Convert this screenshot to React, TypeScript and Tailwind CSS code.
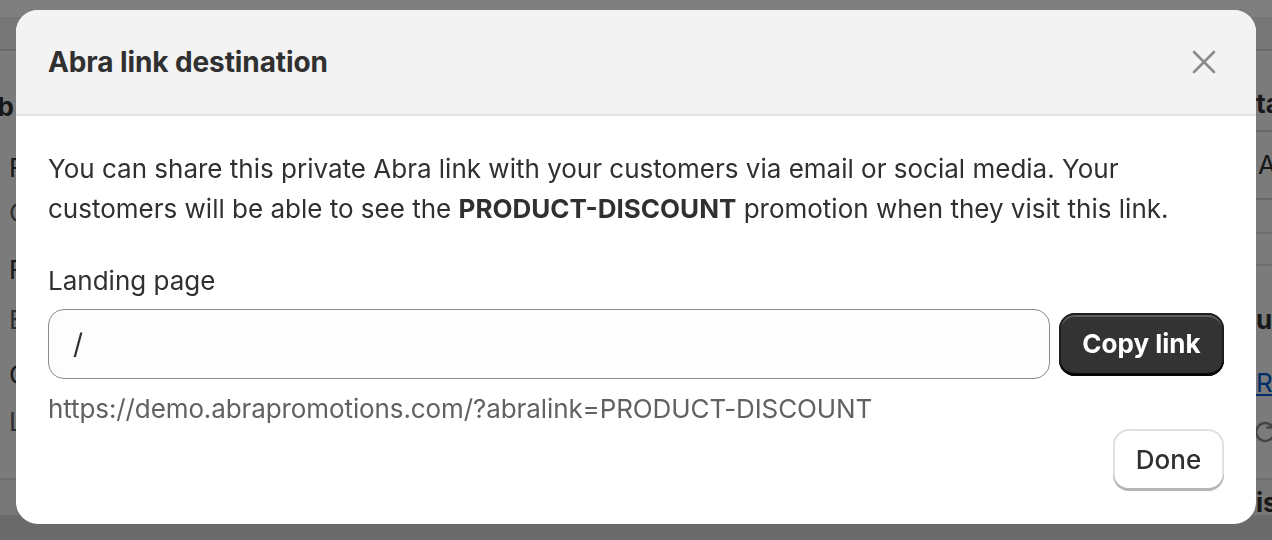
import React from "react"

// Page behind the modal: only its edges stay visible left and right of the dialog
function LeftStrip() {
  return (
    <div className="w-[16px] shrink-0 overflow-hidden flex flex-col text-[26px] leading-[40px]">
      <div className="mt-[36px] flex justify-end whitespace-nowrap font-[650] text-[#303030] pr-[2px]">
        ib
      </div>
      <div className="mt-[21px] pl-[9px] text-[#303030]">F</div>
      <div className="mt-[5px] pl-[9px] text-[#616161]">C</div>
      <div className="mt-[17px] pl-[9px] text-[#303030]">F</div>
      <div className="mt-[10px] pl-[9px] text-[#616161]">E</div>
      <div className="mt-[15px] pl-[9px] text-[#303030]">C</div>
      <div className="mt-[7px] pl-[9px] text-[#616161]">L</div>
    </div>
  )
}

function RightStrip() {
  return (
    <div className="w-[16px] shrink-0 overflow-hidden flex flex-col text-[26px] leading-[40px] text-[#303030]">
      <div className="mt-[33px] whitespace-nowrap font-[650]">ta</div>
      <div className="mt-[6px] h-[70px] border-y-2 border-[#cfcfcf] flex items-center">
        <span className="ml-[2px]">A</span>
      </div>
      <div className="mt-[32px] h-[34px] border-y-2 border-[#dcdcdc] bg-[#f7f7f7]" />
      <div className="mt-[34px] whitespace-nowrap font-[650]">ur</div>
      <div className="mt-[23px] whitespace-nowrap text-[#005bd3] underline">RO</div>
      <div className="mt-[14px] ml-[-6px] text-[#8a8a8a]">
        <svg width="30" height="30" viewBox="0 0 20 20" fill="none" stroke="currentColor" strokeWidth="1.6" strokeLinecap="round" strokeLinejoin="round">
          <path d="M15 6.5a6 6 0 1 0 .8 5.5" />
          <path d="M15.5 3v4h-4" />
        </svg>
      </div>
    </div>
  )
}

function BackgroundPage() {
  return (
    <div className="h-[540px] w-full overflow-hidden bg-[#f6f6f6] flex flex-col">
      <div className="h-[17px] shrink-0 bg-white" />
      <div className="h-[34px] shrink-0 bg-[#ededed] border-b-2 border-[#d6d6d6]" />
      <div className="h-[427px] shrink-0 flex justify-between">
        <LeftStrip />
        <RightStrip />
      </div>
      <div className="h-[37px] shrink-0 border-t-2 border-[#dedede] bg-[#eeeeee] flex justify-end">
        <div className="mt-[3px] w-[16px] overflow-hidden text-[26px] leading-[40px] font-[650] text-[#303030]">
          is
        </div>
      </div>
      <div className="flex-1 bg-[#d5d5d5]" />
    </div>
  )
}

function CloseIcon() {
  return (
    <svg width="24" height="24" viewBox="0 0 24 24" fill="none" stroke="#8a8a8a" strokeWidth="2.6" strokeLinecap="round">
      <path d="M2 2L22 22" />
      <path d="M22 2L2 22" />
    </svg>
  )
}

export default function App() {
  return (
    <div className="relative h-[540px] w-full overflow-hidden font-['Inter','Noto_Sans',sans-serif] antialiased">
      <BackgroundPage />

      {/* overlay + modal */}
      <div className="fixed inset-0 bg-black/50 flex justify-center items-start pt-[10px] px-4">
        <div className="w-full h-[514px] bg-white rounded-[22px] overflow-hidden flex flex-col">
          {/* Header */}
          <div className="h-[106px] shrink-0 bg-[#f3f3f3] border-b-2 border-[#e3e3e3] flex items-center justify-between pl-[32px] pr-[32px]">
            <h2 className="text-[28px] leading-[40px] font-[650] tracking-[-0.1px] text-[#303030]">
              Abra link destination
            </h2>
            <button className="w-10 h-10 flex items-center justify-center">
              <CloseIcon />
            </button>
          </div>

          {/* Body */}
          <div className="flex-1 flex flex-col px-[32px] pt-[33px] text-[26px] leading-[40px] text-[#303030]">
            <p>
              You can share this private Abra link with your customers via email or social media. Your
              <br />
              customers will be able to see the <span className="font-bold">PRODUCT-DISCOUNT</span> promotion when they visit this link.
            </p>

            <label className="mt-[32px]">Landing page</label>
            <div className="mt-[8px] flex items-center gap-[9px]">
              <div className="flex-1 h-[70px] rounded-[16px] border-[1.5px] border-[#8a8a8a] bg-[#fdfdfd] flex items-center pl-[24px] text-[28px]">
                /
              </div>
              <button className="h-[63px] w-[165px] rounded-[16px] bg-[#333333] text-white font-[650] text-[26px] shadow-[inset_0_-3px_0_0_rgba(0,0,0,0.85),inset_0_0_0_2px_#1f1f1f,inset_0_3px_0_1px_rgba(255,255,255,0.22)]">
                Copy link
              </button>
            </div>
            <div className="mt-[10px] tracking-[-0.1px] text-[#616161]">
              https://demo.abrapromotions.com/?abralink=PRODUCT-DISCOUNT
            </div>

            <div className="flex justify-end">
              <button className="h-[62px] w-[111px] rounded-[16px] bg-white text-[#303030] font-medium text-[26px] shadow-[inset_0_-3px_0_0_#b5b5b5,inset_0_0_0_2px_#e0e0e0]">
                Done
              </button>
            </div>
          </div>
        </div>
      </div>
    </div>
  )
}
